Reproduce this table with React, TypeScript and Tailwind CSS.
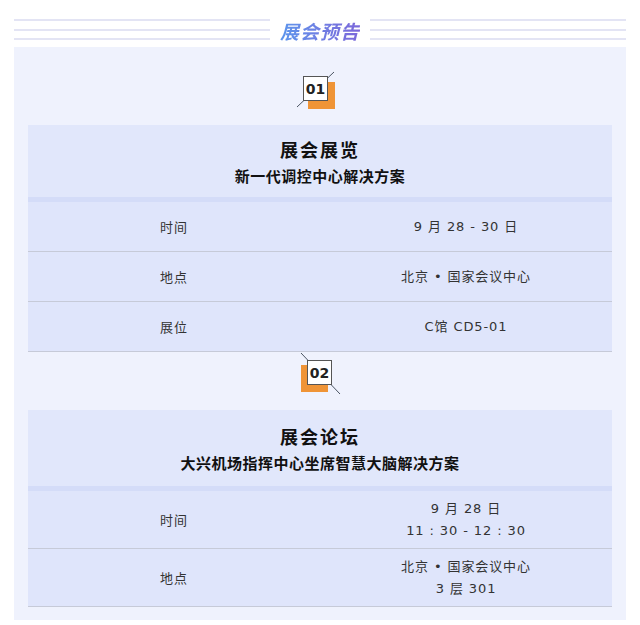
import React from 'react';

type Row = { label: string; lines: string[] };

const Badge: React.FC<{ n: string; flip?: boolean }> = ({ n, flip }) => {
  // flip = second badge style: line goes top-left to bottom-right, orange sits lower-left
  return (
    <div className="relative w-[46px] h-[44px]">
      <svg className="absolute inset-0" width="46" height="44" viewBox="0 0 46 44">
        {flip ? (
          <line x1="4" y1="1" x2="43" y2="42" stroke="#4b5563" strokeWidth="1" />
        ) : (
          <line x1="0" y1="37" x2="37" y2="2" stroke="#4b5563" strokeWidth="1" />
        )}
      </svg>
      <div
        className={
          flip
            ? 'absolute left-[4px] top-[13px] w-[27px] h-[27px] bg-[#ef9436]'
            : 'absolute left-[11px] top-[12px] w-[27px] h-[27px] bg-[#ef9436]'
        }
      ></div>
      <div
        className={
          flip
            ? 'absolute left-[10px] top-[8px] w-[25px] h-[25px] bg-white border border-[#555] flex items-center justify-center'
            : 'absolute left-[6px] top-[6px] w-[25px] h-[25px] bg-white border border-[#555] flex items-center justify-center'
        }
      >
        <span className="font-['DejaVu_Sans',sans-serif] text-[14px] font-bold text-[#222] leading-none">{n}</span>
      </div>
    </div>
  );
};

const Card: React.FC<{ title: string; sub: string; rows: Row[]; headH: string; rowH: string }> = ({
  title,
  sub,
  rows,
  headH,
  rowH,
}) => {
  return (
    <div className="bg-[#dfe5fb]">
      <div className={`${headH} flex flex-col items-center justify-center bg-[#e1e7fb]`}>
        <div className="text-[18px] font-bold text-[#111] tracking-[2px] leading-[26px]">{title}</div>
        <div className="text-[15px] font-bold text-[#111] leading-[22px] tracking-[0.5px] mt-[3px]">{sub}</div>
      </div>
      <div className="h-[5px] bg-[#d4dcf8]"></div>
      {rows.map((r) => (
        <div key={r.label} className={`${rowH} flex items-center border-b border-[#c6cad8]`}>
          <div className="flex-1 text-center text-[13px] text-[#333] tracking-[1px]">{r.label}</div>
          <div className="flex-1 flex flex-col items-center font-['DejaVu_Sans','Noto_Sans_CJK_SC',sans-serif] text-[13px] text-[#333] leading-[22px] tracking-[0.9px]">
            {r.lines.map((l) => (
              <div key={l} className="whitespace-pre">{l}</div>
            ))}
          </div>
        </div>
      ))}
    </div>
  );
};

export default function App() {
  return (
    <div className="w-[640px] h-[625px] bg-white font-['Noto_Sans_CJK_SC',sans-serif] overflow-hidden">
      {/* title bar */}
      <div className="relative h-[47px] mx-[14px]">
        <div className="absolute left-0 right-0 top-[19px] flex flex-col gap-[7.5px]">
          <div className="h-[2px] bg-[#e3e4f4]"></div>
          <div className="h-[2px] bg-[#e3e4f4]"></div>
          <div className="h-[2px] bg-[#e3e4f4]"></div>
        </div>
        <div className="relative flex justify-center pt-[18px]">
          <span className="bg-white px-[10px]">
            <span className="text-[19px] font-semibold italic leading-[26px] tracking-[1px] bg-gradient-to-r from-[#5b95ec] to-[#7b68da] bg-clip-text text-transparent">
              展会预告
            </span>
          </span>
        </div>
      </div>

      <div className="mx-[14px] bg-[#eff2fd] px-[14px] pb-[13px]">
        <div className="h-[78px] flex justify-center pt-[23px]">
          <Badge n="01" />
        </div>
        <Card
          title="展会展览"
          sub="新一代调控中心解决方案"
          headH="h-[72px]"
          rowH="h-[50px]"
          rows={[
            { label: '时间', lines: ['9 月 28 - 30 日'] },
            { label: '地点', lines: ['北京 • 国家会议中心'] },
            { label: '展位', lines: ['C馆 CD5-01'] },
          ]}
        />
        <div className="h-[58px] flex justify-center">
          <Badge n="02" flip />
        </div>
        <Card
          title="展会论坛"
          sub="大兴机场指挥中心坐席智慧大脑解决方案"
          headH="h-[76px]"
          rowH="h-[58px]"
          rows={[
            { label: '时间', lines: ['9 月 28 日', '11 : 30 - 12 : 30'] },
            { label: '地点', lines: ['北京 • 国家会议中心', '3 层 301'] },
          ]}
        />
      </div>
    </div>
  );
}
